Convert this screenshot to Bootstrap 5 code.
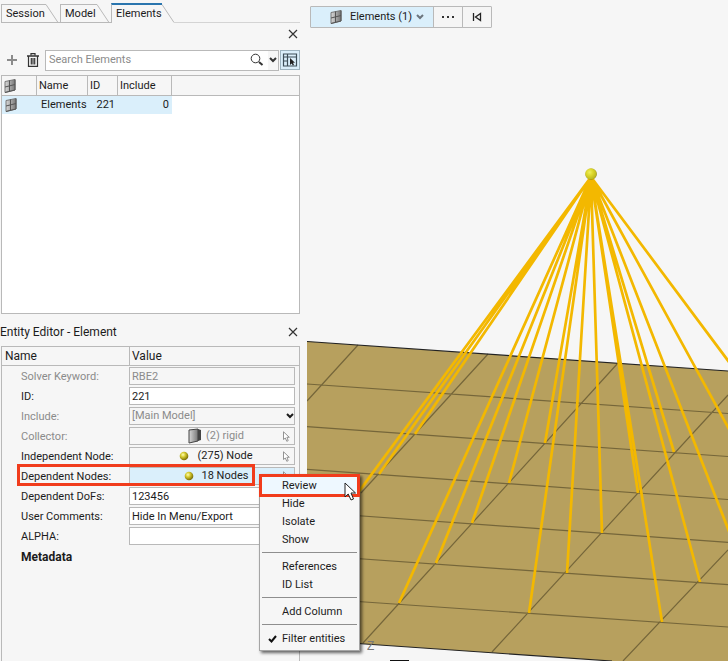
<!DOCTYPE html>
<html lang="en">
<head>
<meta charset="utf-8">
<meta name="viewport" content="width=device-width, initial-scale=1">
<title>Entity Editor</title>
<link rel="stylesheet" href="https://cdn.jsdelivr.net/npm/bootstrap@5.3.0/dist/css/bootstrap.min.css">
<style>
:root{--edge:#b9b9b9;--sel:#daeffb;--panel:#f6f6f6}
body{background:var(--panel);font-family:Roboto,"Liberation Sans",sans-serif;font-size:11px;line-height:18px;color:#1c1c1c}
svg{display:block;flex:none}
button,input,select{font:inherit;color:inherit}
.side-pane{width:300px;flex:none;padding-left:1px}
.bare-btn{border:0;background:none;padding:0;color:#333}
.tab-strip{height:23px;padding-top:3px}
.tab-btn{border:0;background:none;padding:0 0 0 4px;height:19px;margin-top:1px;border-left:1px solid var(--edge);border-top:1px solid var(--edge);border-bottom:1px solid var(--edge);text-align:left;line-height:18px}
.tab-btn.active{border-top:2px solid #2a75ae;border-bottom:0;height:20px;margin-top:0;line-height:16px}
.slant{margin-top:1px}
.tab-one{width:45px}.tab-two{width:37px}.tab-three{width:51px}
.strip-rest{border-bottom:1px solid #d4d4d4}
.closer-row{height:22px;padding-right:2px}
.tool-row{height:26px;padding:4px 0 0 5px}
.search-box{height:21px;border:1px solid var(--edge);background:#fff;margin-left:5px}
.search-box input{border:0;outline:0;background:none;padding:0 3px;min-width:0}
.search-box input::placeholder{color:#8b8b8b;opacity:1}
.title-text,.prop-table th{font-size:12px}
.title-text{margin-left:-1px}
.drop-part{background:var(--panel);width:10px;height:19px}
.toggle-btn{width:20px;height:20px;margin-left:1px;border:1px solid #9eb4c0;background:var(--sel);padding:1px}
.list-frame{height:239px;background:#fff;border:1px solid var(--edge);margin-top:4px}
.list-frame table{width:100%;table-layout:fixed;border-collapse:separate;border-spacing:0}
.list-frame th{font-weight:400;height:20px;padding:0 2px;background:var(--panel);border-right:1px solid var(--edge);border-bottom:1px solid var(--edge)}
.list-frame th:last-child{border-right:0}
.list-frame td{height:18px;padding:0 3px;background:var(--sel)}
.list-frame td:nth-child(2){padding-left:4px}
.list-frame td:last-child{background:#fff}
.w-icon{width:35px}.w-name{width:51px}.w-id{width:30px}.w-inc{width:54px}
.editor-title{height:32px;padding:9px 2px 0 0}
.editor-frame{border:1px solid var(--edge);border-bottom:0}
.prop-table{width:100%;table-layout:fixed;border-collapse:separate;border-spacing:0}
.prop-table th{font-weight:400;height:19px;padding:0 3px;border-bottom:1px solid var(--edge)}
.prop-table th+th{border-left:1px solid var(--edge);padding-left:2px}
.prop-table td{height:20px;padding:1px 4px 1px 0;vertical-align:top}
.prop-table td:first-child{padding:1px 0 1px 19px}
.prop-table label{display:block;height:18px;line-height:20px}
.prop-table td.group-cell{font-size:12px;line-height:20px}
.w-label{width:127px}
.field{display:flex;align-items:center;justify-content:center;position:relative;width:100%;height:18px;line-height:16px;padding:0 2px;border:1px solid var(--edge);border-radius:0;background:#fff;outline:0}
button.field{padding:0 0 0 8px}
.field.flat,.field:disabled{background:var(--panel)}
.field.chosen{background:var(--sel)}
.field:disabled,.dim{color:#8b8b8b}
select.field{appearance:none}
.select-wrap{position:relative}
.select-wrap svg{position:absolute;right:1px;top:6px}
.picker-arrow{position:absolute;right:4px;top:3px}
.mark-box{position:absolute;border:3px solid #f13c1c;pointer-events:none}
.mark-row{left:15px;top:117px;width:238px;height:22px}
.mark-item{left:-1px;top:-1px;right:-1px;height:23px}
.entity-menu.dropdown-menu{display:block;position:absolute;z-index:5;left:257px;top:127px;min-width:0;width:101px;padding:2px 0;margin:0;border:1px solid #a5a5a5;border-radius:0;background:#f6f6f6;box-shadow:2px 2px 3px #0009;font-size:11px}
.entity-menu .dropdown-item{height:18px;line-height:18px;padding:0 0 0 22px;color:#1c1c1c}
.entity-menu .dropdown-item.hot{background:#eef8ff}
.entity-menu .dropdown-divider{margin:3px 2px 5px;border-top:1px solid #8e8e8e;opacity:1}
.tick{position:absolute;left:8px;bottom:7px}
.pointer{position:absolute;left:84px;top:7px}
.view-pane{position:relative;margin-left:7px;min-width:0;overflow:hidden}
.scene{position:absolute;left:0;top:0;width:100%;height:100%}
.view-bar{position:relative;margin:6px 0 0 3px}
.view-bar .btn{--bs-btn-border-radius:1px;--bs-btn-border-color:#b9b9b9;--bs-btn-bg:#f5f5f5;--bs-btn-color:#1c1c1c;font-size:11px;line-height:20px;height:22px;padding:0}
.view-bar .main-pick{--bs-btn-bg:#daeffb;width:124px;padding-left:10px}
.view-bar .more-pick{width:30px}
</style>
</head>
<body>
<svg width="0" height="0" class="position-absolute" aria-hidden="true">
<defs>
<linearGradient id="steel" x1="0" x2="1"><stop stop-color="#d8d8d8"/><stop offset="1" stop-color="#777"/></linearGradient>
<radialGradient id="gold" cx=".38" cy=".35" r=".7"><stop stop-color="#ffffb0"/><stop offset=".4" stop-color="#d5c92e"/><stop offset="1" stop-color="#6d6200"/></radialGradient>
<symbol id="mesh" viewBox="0 0 12 16"><path d="M1 3.500 11 1.500V12L1 14.500Z" fill="url(#steel)" stroke="#777"/><path d="M11 1.500V12L1 14.500M5.500 2.500V13.500M1 9 11 6.500" stroke="#555" fill="none"/></symbol>
<symbol id="cross" viewBox="0 0 10 10"><path d="M1 1 9 9M9 1 1 9" stroke="#333" stroke-width="1.200" fill="none"/></symbol>
<symbol id="chev" viewBox="0 0 8 6"><path d="M1 1 4 4 7 1" stroke="currentColor" stroke-width="2" fill="none"/></symbol>
<symbol id="ball" viewBox="0 0 10 10"><circle cx="5" cy="5" r="4.300" fill="url(#gold)"/></symbol>
<symbol id="arrow" viewBox="0 0 12 19"><path d="M1 1V15L4.200 12 7 18 9.500 17 7 11H11.500Z" fill="#fff" stroke="#222"/></symbol>
<symbol id="pick" viewBox="0 0 7 11"><path d="M.5.800V8.500L2.300 7 3.800 10.300 5.200 9.600 3.900 6.300H6.300Z" fill="#fff" stroke="#888" stroke-width=".9"/></symbol>
</defs>
</svg>
<div class="d-flex min-vh-100">
<aside class="side-pane d-flex flex-column">
  <div class="tab-strip d-flex" role="tablist">
    <button type="button" class="tab-btn tab-one" role="tab">Session</button>
    <svg class="slant" width="14" height="19"><path d="M0 .5 12 18.500M0 18.500H14" stroke="#b9b9b9" fill="none"/></svg>
    <button type="button" class="tab-btn tab-two" role="tab">Model</button>
    <svg class="slant" width="14" height="19"><path d="M0 .5 12 18.500M0 18.500H14" stroke="#b9b9b9" fill="none"/></svg>
    <button type="button" class="tab-btn tab-three active" role="tab" aria-selected="true">Elements</button>
    <svg class="slant" width="12" height="19"><path d="M0 .5 12 18.500" stroke="#b9b9b9" fill="none"/></svg>
    <div class="strip-rest flex-grow-1"></div>
  </div>
  <div class="closer-row d-flex align-items-center justify-content-end">
    <button type="button" class="bare-btn" aria-label="Close browser"><svg width="10" height="10"><use href="#cross"/></svg></button>
  </div>
  <div class="tool-row d-flex align-items-center">
    <button type="button" class="bare-btn" aria-label="Add"><svg width="12" height="12"><path d="M6 1V11M1 6H11" stroke="#8b8b8b" stroke-width="2"/></svg></button>
    <button type="button" class="bare-btn ms-2" aria-label="Delete"><svg width="14" height="14" viewBox="-1 0 14 14" fill="none" stroke="#333"><path d="M0 3H12" stroke-width="1.500"/><path d="M4 2.500V.7H8V2.500M1.500 3V13.300H10.500V3M4.300 5V11.500M6 5V11.500M7.700 5V11.500" stroke-width="1.200"/></svg></button>
    <div class="search-box d-flex align-items-center flex-grow-1">
      <input type="text" class="flex-grow-1" placeholder="Search Elements" aria-label="Search Elements">
      <svg width="14" height="14" class="me-1" fill="none" stroke="#333"><circle cx="5.500" cy="5.500" r="4.300"/><path d="M9 9 12.500 12" stroke-width="2"/></svg>
      <button type="button" class="bare-btn drop-part" aria-label="Search options"><svg width="8" height="6" class="m-auto"><use href="#chev"/></svg></button>
    </div>
    <button type="button" class="toggle-btn" aria-label="Column view"><svg width="16" height="16" fill="none" stroke="#3d4e58"><path d="M1.500 2H14.500V14H1.500ZM1.500 5H14.500M5.500 2V14M1.500 9H5.500" stroke-width="1.200"/><path d="M8 6V13L9.700 11.500 10.800 13.500 12 13 11 10.700H13Z" fill="#222" stroke="none"/></svg></button>
  </div>
  <div class="list-frame">
    <table>
      <colgroup><col class="w-icon"><col class="w-name"><col class="w-id"><col class="w-inc"><col></colgroup>
      <thead><tr><th aria-label="Type"><svg width="12" height="16"><use href="#mesh"/></svg></th><th>Name</th><th>ID</th><th>Include</th><th></th></tr></thead>
      <tbody><tr><td><svg width="12" height="16"><use href="#mesh"/></svg></td><td>Elements</td><td class="text-end">221</td><td class="text-end">0</td><td></td></tr></tbody>
    </table>
  </div>
  <div class="editor-title d-flex justify-content-between">
    <span class="title-text">Entity Editor - Element</span>
    <button type="button" class="bare-btn align-self-start" aria-label="Close editor"><svg width="10" height="10" class="mt-1"><use href="#cross"/></svg></button>
  </div>
  <div class="editor-frame position-relative flex-grow-1">
    <table class="prop-table">
      <colgroup><col class="w-label"><col></colgroup>
      <thead><tr><th>Name</th><th>Value</th></tr></thead>
      <tbody>
      <tr><td><label for="kw" class="dim">Solver Keyword:</label></td><td><input id="kw" class="field" value="RBE2" disabled></td></tr>
      <tr><td><label for="eid">ID:</label></td><td><input id="eid" class="field" value="221"></td></tr>
      <tr><td><label for="inc" class="dim">Include:</label></td><td><div class="select-wrap"><select id="inc" class="field" disabled><option>[Main Model]</option></select><svg width="8" height="6"><use href="#chev"/></svg></div></td></tr>
      <tr><td><label for="col" class="dim">Collector:</label></td><td><button type="button" id="col" class="field flat dim"><svg width="14" height="16" class="me-1"><path d="M1 2 10 1V13L1 15Z" fill="url(#steel)" stroke="#444"/><path d="M10 1 13 2V12L10 13Z" fill="#444"/></svg>(2) rigid<svg class="picker-arrow" width="7" height="11"><use href="#pick"/></svg></button></td></tr>
      <tr><td><label for="ind">Independent Node:</label></td><td><button type="button" id="ind" class="field flat"><svg width="10" height="10" class="me-2"><use href="#ball"/></svg>(275) Node<svg class="picker-arrow" width="7" height="11"><use href="#pick"/></svg></button></td></tr>
      <tr><td><label for="dep">Dependent Nodes:</label></td><td><button type="button" id="dep" class="field chosen"><svg width="10" height="10" class="me-2"><use href="#ball"/></svg>18 Nodes<svg class="picker-arrow" width="7" height="11"><use href="#pick"/></svg></button></td></tr>
      <tr><td><label for="dof">Dependent DoFs:</label></td><td><input id="dof" class="field" value="123456"></td></tr>
      <tr><td><label for="com">User Comments:</label></td><td><input id="com" class="field" value="Hide In Menu/Export"></td></tr>
      <tr><td><label for="alp">ALPHA:</label></td><td><input id="alp" class="field"></td></tr>
      <tr><td colspan="2" class="fw-bold group-cell">Metadata</td></tr>
      </tbody>
    </table>
    <div class="mark-box mark-row"></div>
    <div class="dropdown-menu entity-menu">
      <button type="button" class="dropdown-item hot">Review</button>
      <button type="button" class="dropdown-item">Hide</button>
      <button type="button" class="dropdown-item">Isolate</button>
      <button type="button" class="dropdown-item">Show</button>
      <hr class="dropdown-divider">
      <button type="button" class="dropdown-item">References</button>
      <button type="button" class="dropdown-item">ID List</button>
      <hr class="dropdown-divider">
      <button type="button" class="dropdown-item">Add Column</button>
      <hr class="dropdown-divider">
      <button type="button" class="dropdown-item">Filter entities</button>
      <svg class="tick" width="9" height="8"><path d="M1 4 3.500 6.500 8 1" fill="none" stroke="#111" stroke-width="2"/></svg>
      <div class="mark-box mark-item"></div>
      <svg class="pointer" width="12" height="19"><use href="#arrow"/></svg>
    </div>
  </div>
</aside>
<main class="view-pane flex-grow-1">
  <svg class="scene" viewBox="307 0 421 661" preserveAspectRatio="xMinYMin slice">
    <path d="M307 341.500 728 371V669L307 640Z" fill="#b7a05e"/>
    <path d="M307 384 728 413.500M307 426.700 728 456.500M307 469.300 728 499.500M307 512 728 542.300M307 555 728 584.700M307 598 728 627M358 345 307 401M488 354 361 493M618 363 363 643M728 395 492 652M728 550 623 661" fill="none" stroke="#75663a" stroke-width="1.200"/>
    <path d="M307 341.500 728 371M307 640 612 661" stroke="#222" stroke-width="1.200" fill="none"/>
    <path d="M591 177 343 513M591 177 379 474M591 177 415 434M591 177 399 603M591 177 436 563M591 177 472 523M591 177 509 483M591 177 545 443M591 177 529 613M591 177 567 573M591 177 602 533M591 177 638 493M591 177 674 452M591 177 662 622M591 177 700 582M591 177 732 539M591 177 735 440M591 177 735 370" stroke="#f3b800" stroke-width="2.700" fill="none"/>
    <circle cx="591" cy="174" r="5.800" fill="url(#gold)"/><circle cx="591" cy="174" r="5.500" fill="#e2e22c" fill-opacity=".6"/>
    <text x="367" y="650" font-family="Liberation Sans" font-size="12" fill="#777">Z</text>
    <path d="M390 660.500H409" stroke="#111"/>
  </svg>
  <div class="view-bar btn-group">
    <button type="button" class="btn main-pick d-flex align-items-center justify-content-center"><svg width="12" height="16" class="me-2"><use href="#mesh"/></svg>Elements (1)<svg width="8" height="6" class="ms-1 text-secondary"><use href="#chev"/></svg></button>
    <button type="button" class="btn more-pick" aria-label="More"><svg width="12" height="4" class="m-auto" fill="#333"><path d="M0 1H2V3H0ZM5 1H7V3H5ZM10 1H12V3H10Z"/></svg></button>
    <button type="button" class="btn more-pick" aria-label="Reset"><svg width="10" height="10" class="m-auto" fill="none" stroke="#222" stroke-width="1.300"><path d="M1.500 1V9M8.500 1.500V8.500L3.500 5Z"/></svg></button>
  </div>
</main>
</div>
<script src="https://cdn.jsdelivr.net/npm/bootstrap@5.3.0/dist/js/bootstrap.bundle.min.js"></script>
</body>
</html>
